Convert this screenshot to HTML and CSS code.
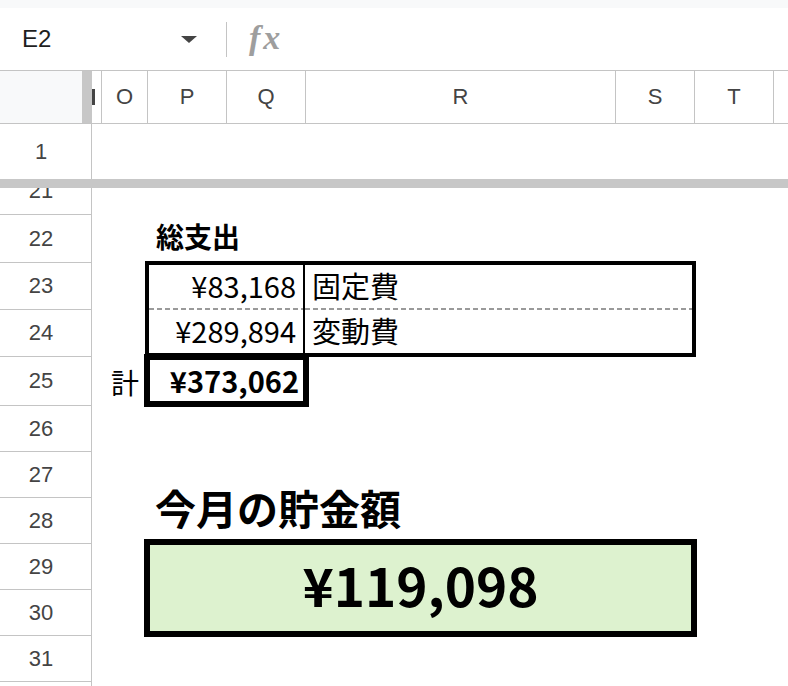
FILE: index.html
```html
<!DOCTYPE html>
<html lang="ja">
<head>
    <meta charset="UTF-8">
    <meta name="viewport" content="width=device-width, initial-scale=1.0">
    <title>家計簿 - 今月の貯金額</title>
    <link rel="stylesheet" href="styles.css">
</head>
<body>
<div class="top-strip"></div>

<div class="formula-bar">
    <div class="name-box">
        <span class="cell-ref">E2</span>
        <span class="caret"></span>
    </div>
    <div class="divider"></div>
    <span class="fx">fx</span>
</div>

<div class="col-headers">
    <div class="corner"></div>
    <div class="freeze-v"></div>
    <div class="col-head col-n"><span class="stem"></span></div>
    <div class="col-head col-o">O</div>
    <div class="col-head col-p">P</div>
    <div class="col-head col-q">Q</div>
    <div class="col-head col-r">R</div>
    <div class="col-head col-s">S</div>
    <div class="col-head col-t">T</div>
    <div class="col-head col-u"></div>
</div>

<div class="frozen-row">
    <div class="row-head">1</div>
    <div class="row-cells"></div>
</div>
<div class="freeze-h"></div>

<div class="sheet">
    <!-- row numbers -->
    <div class="row-head cut"><span>21</span></div>
    <div class="row-head">22</div>
    <div class="row-head">23</div>
    <div class="row-head">24</div>
    <div class="row-head">25</div>
    <div class="row-head">26</div>
    <div class="row-head">27</div>
    <div class="row-head">28</div>
    <div class="row-head">29</div>
    <div class="row-head">30</div>
    <div class="row-head">31</div>
    <div class="row-head"></div>

    <!-- 総支出 -->
    <div class="title-expense">総支出</div>
    <div class="expense-table">
        <div class="amount row-top">¥83,168</div>
        <div class="label row-top">固定費</div>
        <div class="amount">¥289,894</div>
        <div class="label">変動費</div>
    </div>
    <div class="total-label">計</div>
    <div class="total-box">¥373,062</div>

    <!-- 貯金 -->
    <div class="title-savings">今月の貯金額</div>
    <div class="savings-box">¥119,098</div>
</div>
</body>
</html>
```

FILE: styles.css
```css
html, body {
    margin: 0;
    padding: 0;
}
body {
    width: 788px;
    height: 686px;
    overflow: hidden;
    background: #fff;
    font-family: "Liberation Sans", Arial, sans-serif;
    color: #444;
}
.top-strip {
    height: 8px;
    background: #f8f9fa;
}
.formula-bar {
    height: 62px;
    display: flex;
    align-items: center;
    border-bottom: 1px solid #c4c4c4;
}
.name-box {
    width: 175px;
    padding-left: 22px;
    display: flex;
    align-items: center;
    justify-content: space-between;
}
.cell-ref {
    font-size: 24px;
    color: #1f1f1f;
}
.caret {
    width: 0;
    height: 0;
    border-left: 8px solid transparent;
    border-right: 8px solid transparent;
    border-top: 7px solid #444;
}
.divider {
    width: 1px;
    height: 35px;
    margin-left: 29px;
    background: #c4c4c4;
}
.fx {
    margin-left: 22px;
    margin-top: -2px;
    font-family: "Liberation Serif", "Times New Roman", serif;
    font-style: italic;
    font-weight: bold;
    font-size: 34px;
    color: #9e9e9e;
    letter-spacing: 3px;
}

/* column headers */
.col-headers {
    height: 52px;
    display: flex;
    border-bottom: 1px solid #c4c4c4;
}
.corner {
    width: 82px;
    background: #f8f9fa;
}
.freeze-v {
    width: 10px;
    background: #c7c7c7;
}
.col-head {
    box-sizing: border-box;
    border-right: 1px solid #c4c4c4;
    display: flex;
    align-items: center;
    justify-content: center;
    font-size: 22px;
    color: #444;
}
.col-n { width: 10px; justify-content: flex-start; }
.col-o { width: 46px; }
.col-p { width: 79px; }
.col-q { width: 79px; }
.col-r { width: 310px; }
.col-s { width: 79px; }
.col-t { width: 79px; }
.col-u { flex: 1; border-right: none; }
.stem {
    width: 3px;
    height: 16px;
    background: #444;
}

/* row headers */
.row-head {
    box-sizing: border-box;
    border-right: 1px solid #c4c4c4;
    border-bottom: 1px solid #c4c4c4;
    display: flex;
    align-items: center;
    justify-content: center;
    padding-right: 9px;
    font-size: 22px;
    color: #444;
}
.row-head.cut {
    align-items: flex-end;
    overflow: hidden;
}
.row-head.cut span {
    line-height: 46px;
    flex-shrink: 0;
}
.frozen-row {
    height: 55px;
    display: flex;
}
.frozen-row .row-head {
    width: 92px;
    border-bottom: none;
}
.row-cells {
    flex: 1;
}
.freeze-h {
    height: 9px;
    background: #c7c7c7;
}

/* sheet body */
.sheet {
    display: grid;
    grid-template-columns: 92px 10px 46px 79px 79px 310px 79px 79px 1fr;
    grid-template-rows: 27px 48px 47px 47px 49px 46px 46px 46px 46px 46px 46px 46px;
    font-family: "Noto Sans CJK JP", "Noto Sans", sans-serif;
    color: #000;
}
.sheet .row-head {
    grid-column: 1;
    font-family: "Liberation Sans", Arial, sans-serif;
    color: #444;
}
.title-expense {
    grid-row: 2;
    grid-column: 4 / 8;
    align-self: end;
    margin-bottom: 13px;
    padding-left: 8px;
    font-size: 28px;
    font-weight: bold;
    line-height: 1;
}
.expense-table {
    grid-row: 3 / 5;
    grid-column: 4 / 8;
    margin: -2px -1px 0 -3px;
    border: 4px solid #000;
    display: grid;
    grid-template-columns: 156px 1fr;
    grid-template-rows: 45px 43px;
    font-size: 29px;
}
.amount {
    display: flex;
    align-items: center;
    justify-content: flex-end;
    padding-right: 7px;
    padding-bottom: 3px;
    border-right: 2px solid #000;
}
.label {
    display: flex;
    align-items: center;
    padding-left: 7px;
    padding-bottom: 3px;
}
.row-top {
    padding-bottom: 5px;
    background: repeating-linear-gradient(90deg, #9a9a9a 0 5px, transparent 5px 8px) left bottom / 100% 2px no-repeat;
}
.total-label {
    grid-row: 5;
    grid-column: 3;
    display: flex;
    align-items: center;
    justify-content: flex-end;
    padding-right: 9px;
    font-size: 28px;
}
.total-box {
    grid-row: 5;
    grid-column: 4 / 6;
    margin: -3px -3px -1px -4px;
    border: 6px solid #000;
    background: #fff;
    display: flex;
    align-items: center;
    justify-content: flex-end;
    padding-right: 4px;
    padding-bottom: 2px;
    font-size: 29px;
    font-weight: bold;
}
.title-savings {
    grid-row: 8;
    grid-column: 4 / 9;
    align-self: end;
    margin-bottom: 16px;
    padding-left: 7px;
    font-size: 41px;
    font-weight: bold;
    line-height: 1;
    white-space: nowrap;
}
.savings-box {
    grid-row: 9 / 11;
    grid-column: 4 / 8;
    margin: -5px -2px -1px -4px;
    border: 6px solid #000;
    background: #ddf2cf;
    display: flex;
    align-items: center;
    justify-content: center;
    padding-bottom: 8px;
    font-size: 53px;
    font-weight: bold;
}
```
